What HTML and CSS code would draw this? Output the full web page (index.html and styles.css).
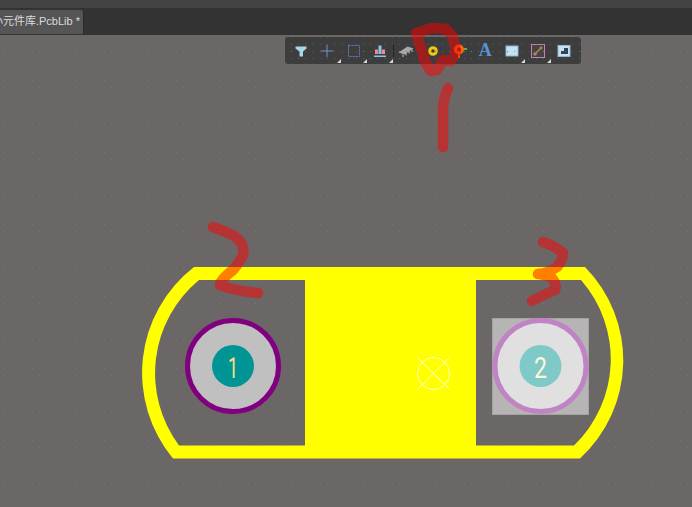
FILE: index.html
```html
<!DOCTYPE html>
<html lang="en-US">

<head>
    <meta charset="UTF-8">
    <meta name="viewport" content="width=device-width, initial-scale=1">
    <title>PcbLib editor</title>
    <link rel="stylesheet" href="styles.css">
</head>

<body>
    <div class="menu-strip"></div>
    <div class="tab-strip">
        <div class="tab"><span class="tab-name">小元件库.PcbLib *</span></div>
    </div>
    <main class="canvas">
        <div class="toolbar">
            <span class="tool"><svg viewBox="0 0 16 16"><path class="ic-filter" d="M2.500 3.500h11v2L10 8.500v5H6.500v-5L2.500 5.500z" /></svg></span>
            <span class="tool more"><svg viewBox="0 0 16 16"><path class="ic-cross" d="M8 2v12M2 8h12" /></svg></span>
            <span class="tool more"><svg viewBox="0 0 16 16"><rect class="ic-select" x="2.500" y="2.500" width="11" height="11" /></svg></span>
            <span class="tool more"><svg viewBox="0 0 16 16"><path class="ic-align" d="M2 12.500h12v1.500H2z" /><path class="ic-bar-red" d="M3 6.500h3V11H3zM10 6.500h3V11h-3z" /><path class="ic-bar-blue" d="M6.500 2.500h3V11h-3z" /></svg></span>
            <span class="sep"></span>
            <span class="tool"><svg viewBox="0 0 16 16"><path class="ic-chip" d="M0.500 9.500l9-6 6 2-9 6z" /><path class="ic-pins" d="M5 11.500v2.500M8 10v2.500M11 8v2.500M14 6.500v2.500" /></svg></span>
            <span class="tool"><svg viewBox="0 0 16 16"><circle class="ic-pad" cx="8" cy="8" r="3.300" /></svg></span>
            <span class="tool"><svg viewBox="0 0 16 16"><path class="ic-via-leg" d="M8 9v6" /><path class="ic-via-arm" d="M11 6h5" /><circle class="ic-via" cx="8" cy="6.500" r="3.500" /></svg></span>
            <span class="tool"><span class="ic-text">A</span></span>
            <span class="tool more"><svg viewBox="0 0 16 16"><rect class="ic-fill" x="2" y="3" width="12" height="10" /></svg></span>
            <span class="tool more"><svg viewBox="0 0 16 16"><rect class="ic-frame" x="1.500" y="1.500" width="13" height="13" /><path class="ic-track" d="M5 11l6-6" /><circle class="ic-node" cx="5" cy="11" r="1.800" /><circle class="ic-node" cx="11" cy="5" r="1.400" /></svg></span>
            <span class="tool"><svg viewBox="0 0 16 16"><rect class="ic-fill" x="2" y="2.500" width="12" height="11" /><path class="ic-corner" d="M5 11V8h3V5h4v6z" /></svg></span>
        </div>

        <!-- footprint drawing, coordinates are page pixels -->
        <svg class="board" viewBox="0 0 692 507" width="692" height="507">
            <defs>
                <pattern id="fine-grid" x="3" y="15" width="7.200" height="7.200" patternUnits="userSpaceOnUse">
                    <circle class="fine-dot" cx="0.500" cy="0.500" r="0.500" />
                </pattern>
                <pattern id="grid" x="3" y="15" width="36" height="36" patternUnits="userSpaceOnUse">
                    <circle class="grid-dot" cx="0.500" cy="0.500" r="0.600" />
                </pattern>
            </defs>
            <rect class="fine-grid" x="0" y="35" width="692" height="472" />
            <rect class="grid" x="0" y="35" width="692" height="472" />

            <path class="outline" fill-rule="evenodd"
                d="M194 267H585A133 133 0 0 1 580 458.500H173A134 134 0 0 1 194 267ZM199 280A121 121 0 0 0 179 445.500H305V280ZM476 280V445.500H574A120 120 0 0 0 581 280Z" />

            <circle class="origin" cx="433.500" cy="373.500" r="16" />
            <path class="origin" d="M417.500 357.500L449.500 389.500M449.500 357.500L417.500 389.500" />

            <circle class="pad1-ring" cx="233" cy="366" r="45.500" />
            <circle class="pad1-hole" cx="233" cy="366" r="21" />
            <text class="pad-num pad1-num" x="233" y="378" textLength="10" lengthAdjust="spacingAndGlyphs">1</text>

            <rect class="pad2-mask" x="492.500" y="318.500" width="96" height="96" />
            <circle class="pad2-ring" cx="540.500" cy="366" r="45.500" />
            <circle class="pad2-hole" cx="540.500" cy="366" r="21" />
            <text class="pad-num pad2-num" x="540.500" y="378" textLength="13" lengthAdjust="spacingAndGlyphs">2</text>

            <!-- hand drawn annotations -->
            <path class="mark" d="M416 33L432 28L446 29L453 37L456 52L451 61L443 60L437 70L431 71L425 62L421 48ZM448 88Q443 100 443 110L443 147" />
            <path class="mark" d="M213 227Q230 233 237 238Q245 245 243 255Q240 262 233 270Q220 280 220 285Q235 291 258 293" />
            <path class="mark" d="M543 242Q555 246 563 253Q563 260 557 267Q548 273 538 274Q548 275 552 278Q557 284 555 290Q545 294 532 301" />
        </svg>
    </main>
</body>

</html>
```
FILE: styles.css
```css
html,
body {
    margin: 0;
    height: 100%;
    overflow: hidden;
    background: #6b6766;
    font-family: "Liberation Sans", "Noto Sans CJK SC", sans-serif;
}

body {
    display: flex;
    flex-direction: column;
}

/* Top strips */
.menu-strip {
    height: 8px;
    flex: none;
    background: #434343;
}

.tab-strip {
    height: 27px;
    flex: none;
    box-sizing: border-box;
    padding: 2px 0 1px;
    display: flex;
    background: #333333;
}

.tab {
    width: 84px;
    box-sizing: border-box;
    padding-right: 3px;
    display: flex;
    justify-content: flex-end;
    border-radius: 0 3px 0 0;
    border-right: 1px solid #2a2a2a;
    background: #555555;
    color: #dcdcdc;
    font-size: 11px;
    line-height: 23px;
    overflow: hidden;
}

.tab-name {
    flex: none;
    white-space: nowrap;
}

/* Canvas */
.canvas {
    flex: 1;
    position: relative;
}

.board {
    position: absolute;
    left: 0;
    top: -35px;
}

.fine-grid {
    fill: url(#fine-grid);
}

.grid {
    fill: url(#grid);
}

.fine-dot {
    fill: #716d6c;
}

.grid-dot {
    fill: #7e7a78;
}

/* Floating toolbar */
.toolbar {
    position: absolute;
    z-index: 0;
    left: 285px;
    top: 2px;
    width: 296px;
    height: 27px;
    box-sizing: border-box;
    padding-left: 3px;
    display: flex;
    align-items: center;
    border-radius: 3px;
    background: #3d3d3d;
}

.tool {
    position: relative;
    width: 26.300px;
    height: 27px;
    flex: none;
    display: flex;
    align-items: center;
    justify-content: center;
}

.tool svg {
    width: 16px;
    height: 16px;
}

.tool.more::after {
    content: "";
    position: absolute;
    right: 0;
    bottom: 1px;
    border-left: 4px solid transparent;
    border-bottom: 4px solid #d8d8d8;
}

.sep {
    width: 1px;
    height: 13px;
    margin-right: -1px;
    flex: none;
    background: #222222;
}

.ic-filter {
    fill: #a6d8e8;
}

.ic-cross {
    fill: none;
    stroke: #6f94d8;
    stroke-width: 1;
}

.ic-select {
    fill: none;
    stroke: #5f7fc8;
    stroke-width: 1;
    stroke-dasharray: 2 1;
}

.ic-align {
    fill: #8fc3ea;
}

.ic-bar-red {
    fill: #ef8d8d;
}

.ic-bar-blue {
    fill: #8fc3ea;
}

.ic-chip {
    fill: #a8a8a8;
}

.ic-pins {
    fill: none;
    stroke: #b5c2c8;
    stroke-width: 1;
}

.ic-pad {
    fill: #3d3d3d;
    stroke: #f3c60f;
    stroke-width: 3;
}

.ic-via {
    fill: #7a2a10;
    stroke: #f26a12;
    stroke-width: 3;
}

.ic-via-leg {
    fill: none;
    stroke: #f26a12;
    stroke-width: 2;
}

.ic-via-arm {
    fill: none;
    stroke: #6cae3c;
    stroke-width: 2;
}

.ic-text {
    font-family: "Liberation Serif", serif;
    font-size: 18px;
    font-weight: bold;
    color: #5a93d8;
}

.ic-fill {
    fill: #c5e2f2;
    stroke: #8fb8cf;
    stroke-width: 1;
}

.ic-frame {
    fill: #444444;
    stroke: #c77fb8;
    stroke-width: 1;
}

.ic-track {
    fill: none;
    stroke: #b08a42;
    stroke-width: 1.500;
}

.ic-node {
    fill: #b08a42;
}

.ic-corner {
    fill: #2f4356;
}

/* Footprint */
.outline {
    fill: #ffff00;
}

.origin {
    fill: none;
    stroke: #ffffd0;
    stroke-width: 1;
}

.pad1-ring {
    fill: #c0c0c0;
    stroke: #800080;
    stroke-width: 5;
}

.pad1-hole {
    fill: #009494;
}

.pad-num {
    font-family: Roboto, sans-serif;
    font-size: 30px;
    text-anchor: middle;
}

.pad1-num {
    fill: #ffe08a;
}

.pad2-num {
    fill: #fff6d8;
}

.pad2-mask {
    fill: #b6b4b4;
    stroke: #a5a3a3;
    stroke-width: 1;
}

.pad2-ring {
    fill: #e0e0e0;
    stroke: #c084c4;
    stroke-width: 5;
}

.pad2-hole {
    fill: #80c9c9;
}

/* half transparent pure red gives the orange over the yellow outline */
.mark {
    fill: none;
    stroke: #ff0000;
    stroke-opacity: 0.5;
    stroke-width: 10.500;
    stroke-linecap: round;
    stroke-linejoin: round;
}
```
